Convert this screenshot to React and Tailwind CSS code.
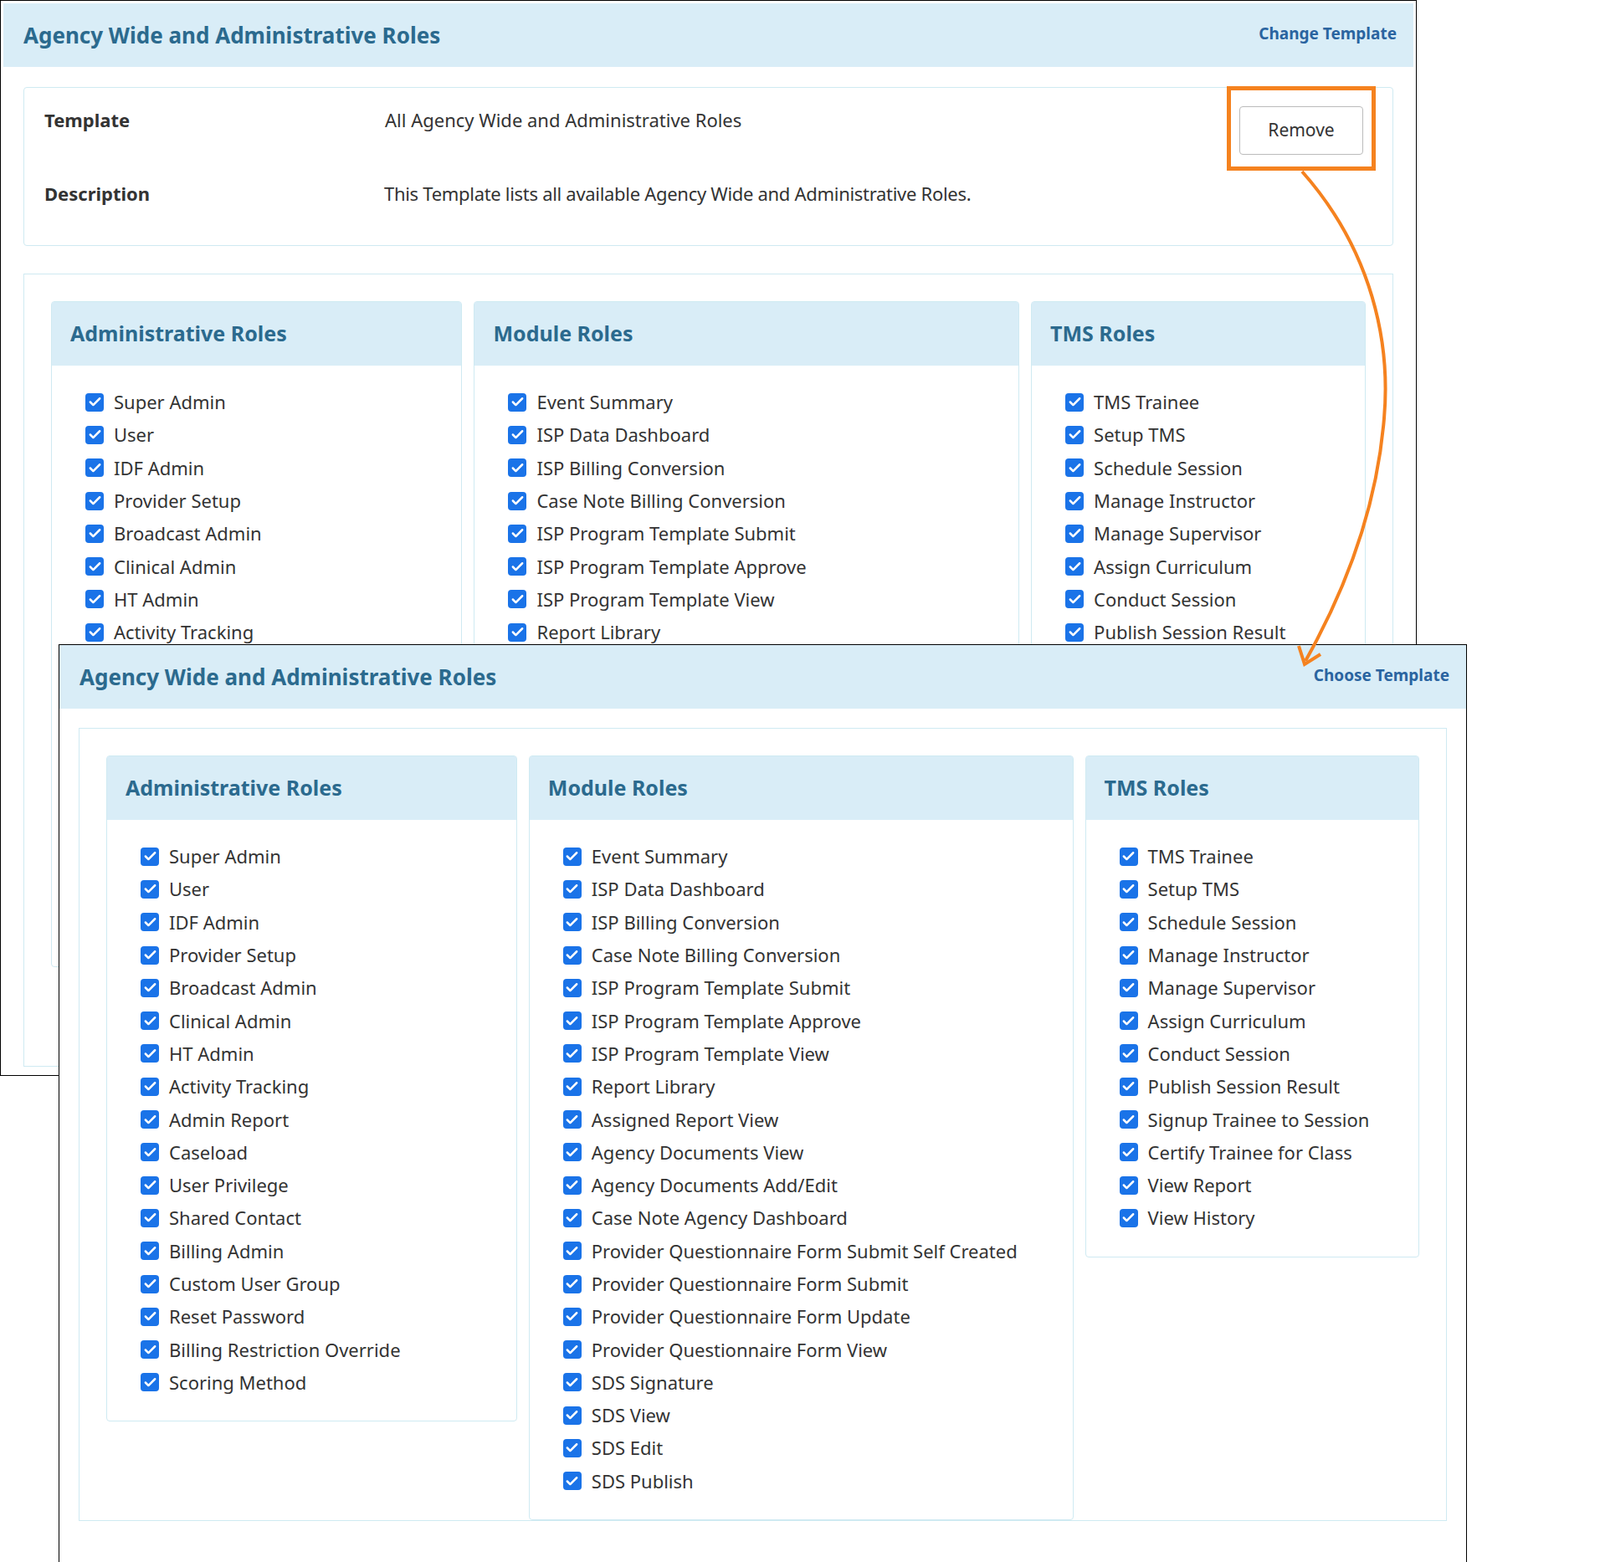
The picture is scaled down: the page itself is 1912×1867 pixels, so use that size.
import { Check } from 'lucide-react';

const adminRoles = ['Super Admin', 'User', 'IDF Admin', 'Provider Setup', 'Broadcast Admin', 'Clinical Admin', 'HT Admin', 'Activity Tracking', 'Admin Report', 'Caseload', 'User Privilege', 'Shared Contact', 'Billing Admin', 'Custom User Group', 'Reset Password', 'Billing Restriction Override', 'Scoring Method'];
const moduleRoles = ['Event Summary', 'ISP Data Dashboard', 'ISP Billing Conversion', 'Case Note Billing Conversion', 'ISP Program Template Submit', 'ISP Program Template Approve', 'ISP Program Template View', 'Report Library', 'Assigned Report View', 'Agency Documents View', 'Agency Documents Add/Edit', 'Case Note Agency Dashboard', 'Provider Questionnaire Form Submit Self Created', 'Provider Questionnaire Form Submit', 'Provider Questionnaire Form Update', 'Provider Questionnaire Form View', 'SDS Signature', 'SDS View', 'SDS Edit', 'SDS Publish'];
const tmsRoles = ['TMS Trainee', 'Setup TMS', 'Schedule Session', 'Manage Instructor', 'Manage Supervisor', 'Assign Curriculum', 'Conduct Session', 'Publish Session Result', 'Signup Trainee to Session', 'Certify Trainee for Class', 'View Report', 'View History'];

function RoleColumn({ title, items, width }) {
  return (
    <div className={`${width} border border-[#cfeaf2] rounded-sm self-start`}>
      <div className="h-[76px] bg-[#d9edf7] flex items-center px-[22px] text-[25px] font-bold text-[#2b6a8e]">{title}</div>
      <div className="pt-[24px] pb-[26px] pl-[40px]">
        {items.map(item => (
          <div key={item} className="h-[39.3px] flex items-center gap-[12px]">
            <span className="w-[22px] h-[22px] rounded-[4px] bg-[#1a73e8] flex items-center justify-center shrink-0">
              <Check size={17} strokeWidth={3.5} className="text-white" />
            </span>
            <span className="text-[22px] text-[#333]">{item}</span>
          </div>
        ))}
      </div>
    </div>
  );
}

function RolesCard() {
  return (
    <div className="border border-[#cfeaf2] pt-[32px] px-[32px] flex gap-[14px]">
      <RoleColumn title="Administrative Roles" items={adminRoles} width="w-[494px]" />
      <RoleColumn title="Module Roles" items={moduleRoles} width="w-[655px]" />
      <RoleColumn title="TMS Roles" items={tmsRoles} width="w-[402px]" />
    </div>
  );
}

function Header({ link }) {
  return (
    <div className="h-[76px] bg-[#d9edf7] flex items-center justify-between pl-[24px] pr-[20px]">
      <h1 className="text-[26px] font-bold text-[#2b6a8e]">Agency Wide and Administrative Roles</h1>
      <a className="text-[19px] font-bold text-[#2a64a0] -mt-[4px] [font-family:'DejaVu_Sans',sans-serif]">{link}</a>
    </div>
  );
}

export default function App() {
  return (
    <div className="relative w-[1912px] h-[1867px] overflow-hidden bg-white [font-family:'Liberation_Sans',Arial,sans-serif]">
      {/* first window */}
      <div className="w-[1693px] h-[1286px] border border-black overflow-hidden bg-white p-[3px]">
        <Header link="Change Template" />
        <div className="px-[24px] pt-[24px]">
          <div className="h-[190px] border border-[#cfeaf2] rounded-[4px] relative text-[22px]">
            <div className="flex pt-[22px] pl-[24px]">
              <span className="w-[407px] font-bold text-[#333]">Template</span>
              <span className="text-[#333]">All Agency Wide and Administrative Roles</span>
            </div>
            <div className="flex pt-[55px] pl-[24px]">
              <span className="w-[406px] font-bold text-[#333]">Description</span>
              <span className="text-[#333] tracking-[-0.3px]">This Template lists all available Agency Wide and Administrative Roles.</span>
            </div>
            <div className="absolute -top-[2px] right-[20px] border-[5px] border-[#f5821f] px-[10px] pb-[14px] pt-[19px]">
              <button className="w-[148px] h-[58px] border border-[#bbb] rounded-[4px] bg-white text-[21px] text-[#333] [font-family:'DejaVu_Sans',sans-serif]">Remove</button>
            </div>
          </div>
          <div className="mt-[33px]">
            <RolesCard />
          </div>
        </div>
      </div>

      {/* second window */}
      <div className="absolute left-[70px] top-[770px] w-[1683px] h-[1110px] border border-black bg-white">
        <Header link="Choose Template" />
        <div className="px-[23px] pt-[23px]">
          <RolesCard />
        </div>
      </div>

      {/* arrow */}
      <svg className="absolute left-0 top-0 pointer-events-none" width="1912" height="1867">
        <path d="M1556 205 C1640 300 1662 410 1654 500 C1645 610 1605 710 1560 790" fill="none" stroke="#f5821f" strokeWidth="4" />
        <path d="M1552 772 L1559 794 L1578 782" fill="none" stroke="#f5821f" strokeWidth="4" />
      </svg>
    </div>
  );
}
